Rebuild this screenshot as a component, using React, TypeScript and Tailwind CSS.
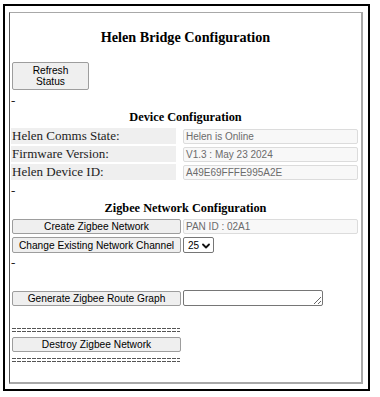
import React from "react";

const serif = "font-['Liberation_Serif','Times_New_Roman',serif]";
const sans = "font-['Liberation_Sans',Arial,sans-serif]";

function Btn({ children, className = "" }: { children: React.ReactNode; className?: string }) {
  return (
    <div
      className={`${sans} flex items-center justify-center text-center text-[10.2px] leading-[11px] text-black bg-[#efefef] border border-[#9d9d9d] rounded-[2px] ${className}`}
    >
      {children}
    </div>
  );
}

function ReadOnly({ value, className = "" }: { value: string; className?: string }) {
  return (
    <div
      className={`${sans} flex items-center pl-[2px] text-[10px] text-[#6b6b6b] bg-[#f8f8f8] border border-[#dcdcdc] rounded-[2px] ${className}`}
    >
      {value}
    </div>
  );
}

function Dashes({ className = "" }: { className?: string }) {
  return (
    <div className={`ml-[1px] w-[168px] h-[4px] flex flex-col justify-between ${className}`}>
      <div className="h-[1px] bg-[repeating-linear-gradient(90deg,#555_0_4px,transparent_4px_5px)]" />
      <div className="h-[1px] bg-[repeating-linear-gradient(90deg,#555_0_4px,transparent_4px_5px)]" />
    </div>
  );
}

export default function App() {
  const rows = [
    ["Helen Comms State:", "Helen is Online"],
    ["Firmware Version:", "V1.3 : May 23 2024"],
    ["Helen Device ID:", "A49E69FFFE995A2E"],
  ];
  return (
    <div className="w-[380px] h-[397px] bg-white overflow-hidden pt-[4px] pl-[3px]">
      <div className="w-[367px] h-[387px] border-2 border-black pl-[4px] pt-[6px]">
        <div className="w-[354px] h-[372px] border-t border-l border-r-2 border-b-2 border-t-[#a8a8a8] border-l-[#555555] border-r-[#a8a8a8] border-b-[#a8a8a8] flex flex-col pl-[1px] pr-[1px] text-[#222]">
          <div className={`${serif} mt-[16px] h-[16px] leading-[16px] text-[14.2px] font-bold text-center text-black`}>
            Helen Bridge Configuration
          </div>

          <Btn className="mt-[17px] ml-[1px] w-[77px] h-[28px]">
            Refresh
            <br />
            Status
          </Btn>

          <div className={`${serif} mt-[3px] h-[15px] leading-[15px] text-[13px]`}>-</div>

          <div className={`${serif} mt-[2px] h-[14px] leading-[14px] text-[12.3px] font-bold text-center text-black`}>
            Device Configuration
          </div>

          <div className="mt-[4px] flex flex-col gap-[2px]">
            {rows.map(([label, value]) => (
              <div key={label} className="flex h-[16px] items-center">
                <div className={`${serif} w-[165px] h-[16px] leading-[16px] text-[13px] bg-[#efefef] pl-[1px]`}>
                  {label}
                </div>
                <ReadOnly value={value} className="ml-[7px] w-[175px] h-[15px]" />
              </div>
            ))}
          </div>

          <div className={`${serif} mt-[3px] h-[15px] leading-[15px] text-[13px]`}>-</div>

          <div className={`${serif} mt-[3px] h-[14px] leading-[14px] text-[12.3px] font-bold text-center text-black`}>
            Zigbee Network Configuration
          </div>

          <div className="mt-[4px] flex items-center h-[15px]">
            <Btn className="ml-[1px] w-[169px] h-[15px]">Create Zigbee Network</Btn>
            <ReadOnly value="PAN ID : 02A1" className="ml-[2px] w-[175px] h-[15px]" />
          </div>

          <div className="mt-[3px] flex items-center h-[16px]">
            <Btn className="ml-[1px] w-[169px] h-[16px]">Change Existing Network Channel</Btn>
            <div
              className={`${sans} ml-[2px] w-[31px] h-[16px] flex items-center pl-[4px] gap-[3px] text-[10px] text-black bg-white border border-[#767676] rounded-[2px]`}
            >
              <span>25</span>
              <svg width="8" height="6" viewBox="0 0 8 6" className="mt-[1px]">
                <path d="M1 1.5 L4 4.5 L7 1.5" fill="none" stroke="#111" strokeWidth="1.8" strokeLinecap="round" strokeLinejoin="round" />
              </svg>
            </div>
          </div>

          <div className={`${serif} mt-[2px] h-[15px] leading-[15px] text-[13px]`}>-</div>

          <div className="mt-[21px] flex items-center h-[15px]">
            <Btn className="ml-[1px] w-[169px] h-[15px]">Generate Zigbee Route Graph</Btn>
            <textarea
              readOnly
              className="ml-[2px] w-[140px] h-[16px] -mt-[1px] border border-[#767676] rounded-[2px] bg-white resize p-0 outline-none"
            />
          </div>

          <Dashes className="mt-[22px]" />

          <Btn className="mt-[5px] ml-[1px] w-[169px] h-[15px]">Destroy Zigbee Network</Btn>

          <Dashes className="mt-[6px]" />
        </div>
      </div>
    </div>
  );
}
